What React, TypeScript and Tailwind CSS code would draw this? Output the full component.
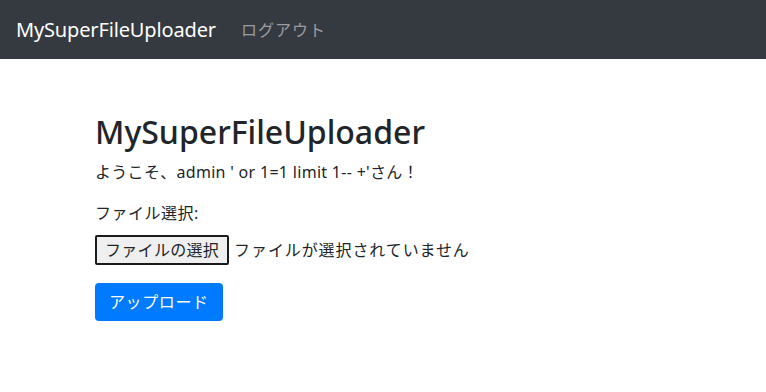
export default function App() {
  return (
    <div className="min-h-screen bg-white text-[#212529]" style={{ fontFamily: '"Noto Sans", "Noto Sans CJK JP", sans-serif' }}>
      <nav className="flex h-[59px] items-center bg-[#343a40] px-4">
        <a className="mr-[25px] text-[20px] leading-none tracking-[-0.15px] text-white">MySuperFileUploader</a>
        <a className="text-[16px] leading-none tracking-[1px] text-white/50">ログアウト</a>
      </nav>

      <main className="pl-[95px] pt-[53px]">
        <h1 className="text-[32px] font-medium leading-[1.24]">MySuperFileUploader</h1>
        <p className="mt-[8px] text-[16px] leading-6 tracking-[0.3px]">ようこそ、admin ' or 1=1 limit 1-- +'さん！</p>

        <form className="mt-[17px]">
          <label className="block text-[16px] leading-6 tracking-[0.5px]">ファイル選択:</label>
          <div className="mt-[10px] flex items-center gap-[5px]">
            <button
              type="button"
              className="h-[30px] rounded-[2px] border-2 border-[#1b1b1b] bg-[#efefef] px-[8px] text-[16px] leading-none tracking-[0.3px]"
            >
              ファイルの選択
            </button>
            <span className="text-[16px] tracking-[0.9px]">ファイルが選択されていません</span>
          </div>
          <button
            type="button"
            className="mt-[18px] h-[38px] rounded-[4px] bg-[#007bff] px-[14px] text-[16px] tracking-[0.6px] text-white"
          >
            アップロード
          </button>
        </form>
      </main>
    </div>
  )
}
